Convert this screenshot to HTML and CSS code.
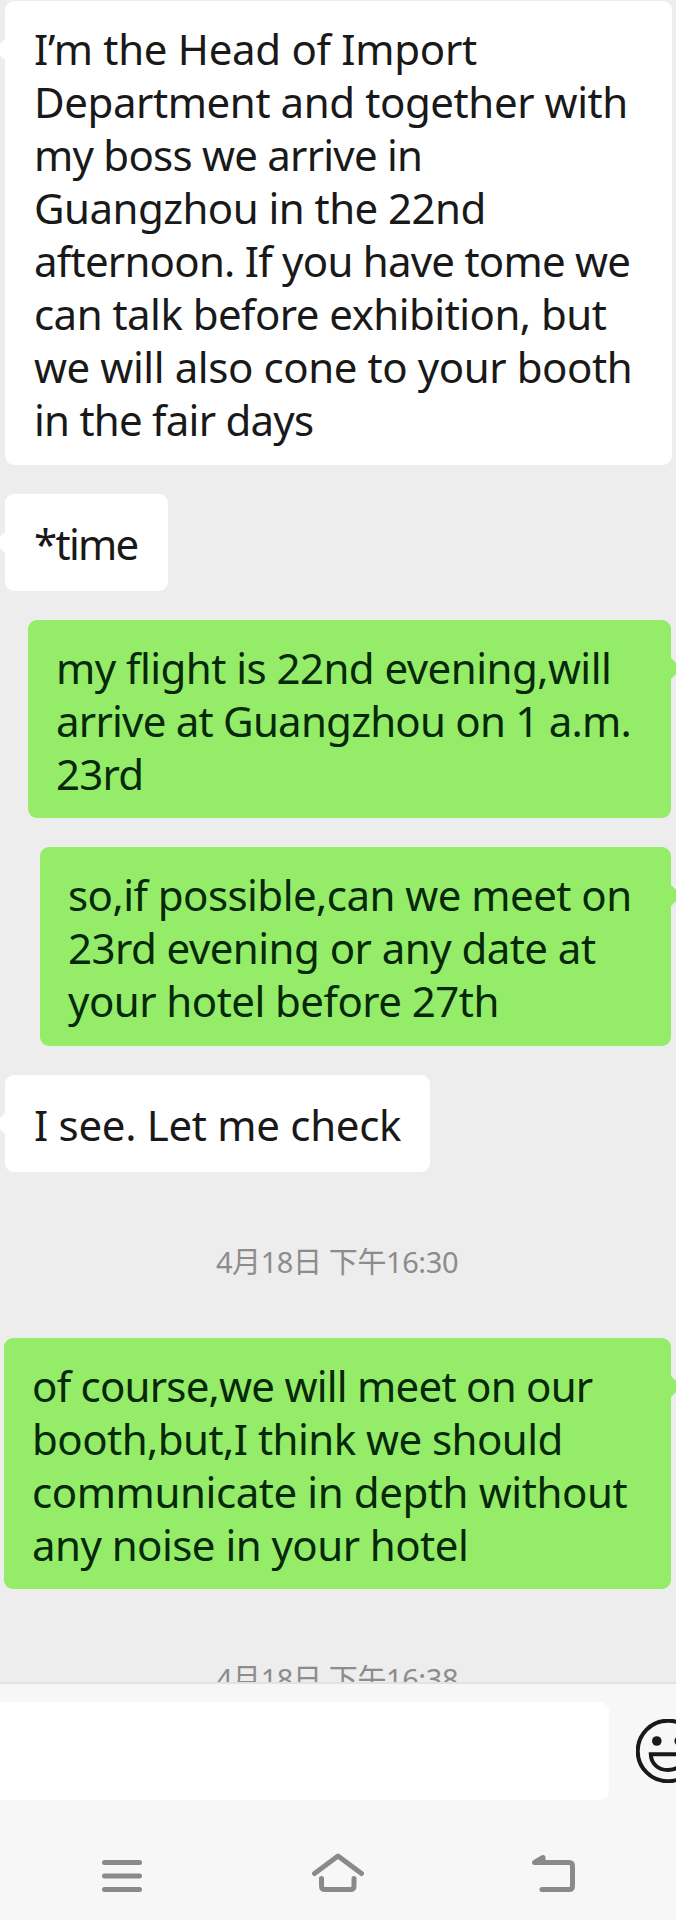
FILE: index.html
```html
<!DOCTYPE html>
<html lang="en">
<head>
    <meta charset="UTF-8">
    <meta name="viewport" content="width=device-width, initial-scale=1.0">
    <title>Chat</title>
    <link rel="stylesheet" href="styles.css">
</head>
<body>
    <div class="chat-screen">
        <main class="messages">
            <div class="bubble received bubble-long">
                <span class="loose">I’m the Head of Import</span><br>
                <span class="wide">Department and together with</span><br>
                <span class="tight">my boss we arrive in</span><br>
                Guangzhou in the 22nd<br>
                <span class="tight">afternoon. If you have tome we</span><br>
                can talk before exhibition, but<br>
                <span class="wide">we will also cone to your booth</span><br>
                <span class="tight">in the fair days</span>
            </div>
            <div class="bubble received single bubble-time">*time</div>
            <div class="bubble sent bubble-flight">
                my flight is 22nd evening,will<br>
                <span class="tight">arrive at Guangzhou on 1 a.m.</span><br>
                <span class="tight">23rd</span>
            </div>
            <div class="bubble sent bubble-meet">
                so,if possible,can we meet on<br>
                23rd evening or any date at<br>
                your hotel before 27th
            </div>
            <div class="bubble received single bubble-check"><span class="loose">I see. Let me check</span></div>
            <div class="timestamp" lang="zh">4月18日 下午16:30</div>
            <div class="bubble sent bubble-course">
                <span class="tight">of course,we will meet on our</span><br>
                booth,but,I think we should<br>
                <span class="wide">communicate in depth without</span><br>
                any noise in your hotel
            </div>
            <div class="timestamp" lang="zh">4月18日 下午16:38</div>
        </main>

        <footer class="bottom">
            <div class="input-bar">
                <div class="input-field"></div>
                <svg class="emoji" width="64" height="64" viewBox="0 0 64 64" fill="none" stroke="#191919" stroke-width="4">
                    <circle cx="32" cy="32" r="30.3"/>
                    <circle cx="20.8" cy="22" r="4.8" fill="#191919" stroke="none"/>
                    <circle cx="43.2" cy="22" r="4.8" fill="#191919" stroke="none"/>
                    <path d="M14.8 35.3h34.4C49 44.5 42 51 32 51S15 44.5 14.8 35.3z"/>
                </svg>
            </div>
            <nav class="nav-bar">
                <svg width="54" height="44" viewBox="0 0 54 44">
                    <path d="M9.5 9.5h35M9.5 23h35M9.5 36.5h35"/>
                </svg>
                <svg width="54" height="44" viewBox="0 0 54 44">
                    <path d="M3.5 20.5L27 3l23.5 17.5M10.5 25.5v7.5q0 3.5 3.5 3.5h25.5q3.5 0 3.5-3.5v-7.5"/>
                </svg>
                <svg width="54" height="44" viewBox="0 0 54 44">
                    <path d="M15 36.5h27q3.5 0 3.5-3.5V13q0-3.5-3.5-3.5H7.5L16 4.5v5"/>
                </svg>
            </nav>
        </footer>
    </div>
</body>
</html>
```
FILE: styles.css
```css
body {
    margin: 0;
    background-color: #ededed;
    font-family: "Noto Sans", "Noto Sans CJK SC", sans-serif;
}

.chat-screen {
    display: flex;
    flex-direction: column;
    height: 1920px;
    overflow: hidden;
}

/* Message list */
.messages {
    display: flex;
    flex-direction: column;
    align-items: flex-start;
    gap: 29px;
    height: 1682px;
    padding: 1px 5px 0;
    box-sizing: border-box;
    overflow: hidden;
}

.bubble {
    position: relative;
    flex: none;
    box-sizing: border-box;
    padding: 21px 0 18.5px 29px;
    border-radius: 9px;
    font-size: 42px;
    line-height: 53px;
    letter-spacing: -0.54px;
    white-space: nowrap;
}

.tight {
    letter-spacing: -0.76px;
}

.wide {
    letter-spacing: -0.42px;
}

.loose {
    letter-spacing: -0.3px;
}

.received {
    background-color: #fff;
    color: #191919;
}

.sent {
    align-self: flex-end;
    padding-left: 28px;
    background-color: #95ec69;
    color: #06290a;
}

/* Tails, partly outside of the screen */
.bubble::after {
    content: "";
    position: absolute;
    top: 40px;
    width: 17px;
    height: 17px;
    border-radius: 3px;
    background-color: inherit;
    transform: rotate(45deg);
}

.received::after {
    left: -7px;
}

.sent::after {
    right: -7px;
}

.single {
    padding: 23px 0 21px 29px;
}

.bubble-long {
    width: 667px;
}

.bubble-time {
    width: 163px;
    letter-spacing: -1.7px;
}

.bubble-flight {
    width: 643px;
}

.bubble-meet {
    width: 631px;
}

.bubble-check {
    width: 425px;
}

.bubble-course {
    width: 667px;
}

.timestamp {
    flex: none;
    align-self: center;
    padding: 45px 2px 31px 0;
    font-size: 29px;
    line-height: 32px;
    letter-spacing: -0.4px;
    color: #8c8c8c;
}

/* Input bar and system navigation */
.bottom {
    flex: 1;
    border-top: 2px solid #e2e2e2;
    background-color: #f7f7f7;
}

.input-bar {
    display: flex;
    align-items: center;
    gap: 27px;
    padding-top: 18px;
}

.input-field {
    flex: none;
    width: 609px;
    height: 98px;
    border-radius: 0 9px 9px 0;
    background-color: #fff;
}

.emoji {
    flex: none;
}

.nav-bar {
    display: flex;
    justify-content: space-between;
    padding: 53px 95px 0;
}

.nav-bar svg {
    fill: none;
    stroke: #8a8a8a;
    stroke-width: 5;
    stroke-linecap: round;
    stroke-linejoin: round;
}
```
